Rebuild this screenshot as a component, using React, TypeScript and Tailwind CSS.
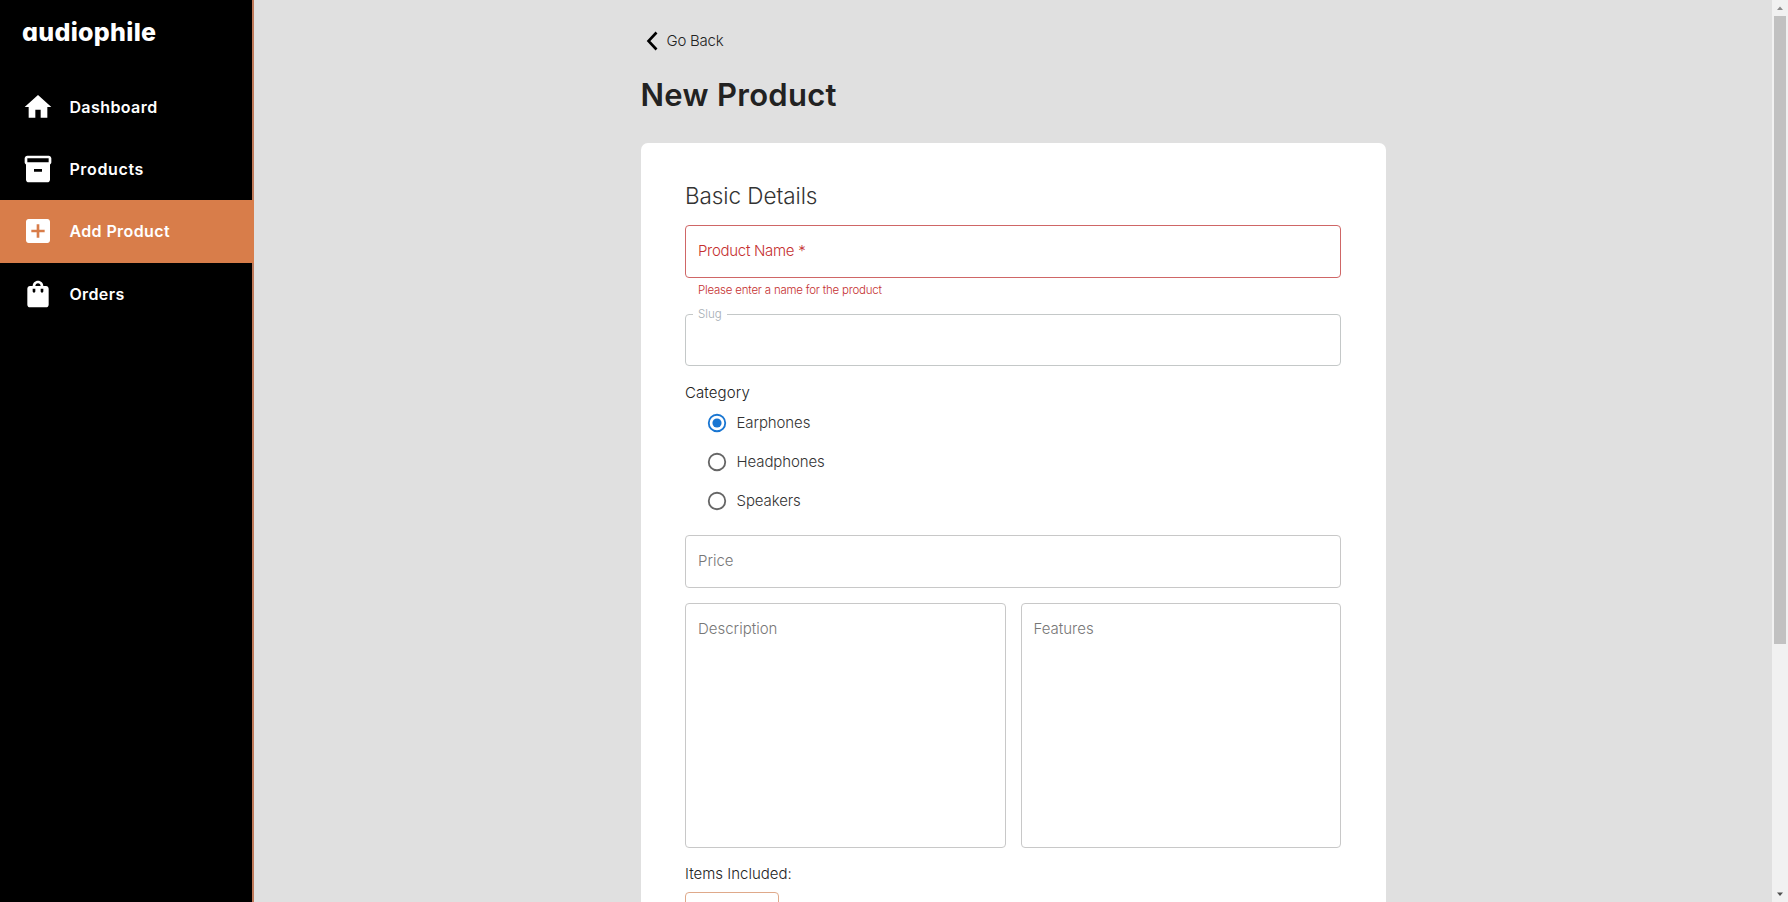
import React from "react";

type IconProps = { d: string; className?: string };

const Icon = ({ d, className }: IconProps) => (
  <svg viewBox="0 0 24 24" fill="currentColor" className={className}>
    <path d={d} />
  </svg>
);

const navItems = [
  { label: "Dashboard", d: "M10 20v-6h4v6h5v-8h3L12 3 2 12h3v8z", spacing: "tracking-[0.42px]" },
  {
    label: "Products",
    d: "M20 2H4c-1 0-2 .9-2 2v3.01c0 .72.43 1.34 1 1.69V20c0 1.1 1.1 2 2 2h14c.9 0 2-.9 2-2V8.7c.57-.35 1-.97 1-1.69V4c0-1.1-1-2-2-2zm-5 12H9v-2h6v2zm5-7H4V4h16v3z",
    spacing: "tracking-[0.65px]",
  },
  {
    label: "Add Product",
    d: "M19 3H5c-1.11 0-2 .9-2 2v14c0 1.1.89 2 2 2h14c1.1 0 2-.9 2-2V5c0-1.1-.9-2-2-2zm-2 10h-4v4h-2v-4H7v-2h4V7h2v4h4v2z",
    spacing: "tracking-[0.4px]",
    active: true,
  },
  {
    label: "Orders",
    d: "M18 6h-2c0-2.21-1.79-4-4-4S8 3.79 8 6H6c-1.1 0-2 .9-2 2v12c0 1.1.9 2 2 2h12c1.1 0 2-.9 2-2V8c0-1.1-.9-2-2-2zm-8 4c0 .55-.45 1-1 1s-1-.45-1-1V8h2v2zm2-6c1.1 0 2 .9 2 2h-4c0-1.1.9-2 2-2zm4 6c0 .55-.45 1-1 1s-1-.45-1-1V8h2v2z",
    spacing: "tracking-[0.4px]",
  },
];

const Sidebar = () => (
  <aside className="flex w-[254px] shrink-0 flex-col border-r-2 border-[#bf7a5a] bg-black text-white">
    <div className="h-[75.4px] pl-[22px] pt-4 text-[25px] font-extrabold leading-[32px] tracking-[0.3px] [font-feature-settings:'cv11']">
      audiophile
    </div>
    <nav className="flex flex-col">
      {navItems.map((item) => (
        <a
          key={item.label}
          className={`-mr-0.5 flex h-[62.4px] items-center gap-[15px] pl-[22.4px] ${item.active ? "bg-[#d87d4a]" : ""}`}
        >
          <Icon d={item.d} className="size-8" />
          <span className={`text-[16px] font-semibold ${item.spacing}`}>{item.label}</span>
        </a>
      ))}
    </nav>
  </aside>
);

const Radio = ({ label, checked }: { label: string; checked?: boolean }) => (
  <label className="flex h-[39.2px] items-center gap-[8.5px] pl-[21px] text-[15px] font-light text-[#333]">
    <svg viewBox="0 0 24 24" className={`size-[22px] ${checked ? "text-[#1976d2]" : "text-[#666]"}`}>
      <circle cx="12" cy="12" r="9" fill="none" stroke="currentColor" strokeWidth="2" />
      {checked && <circle cx="12" cy="12" r="5" fill="currentColor" />}
    </svg>
    <span className="pt-[1.5px] tracking-[-0.1px]">{label}</span>
  </label>
);

const Scrollbar = () => (
  <div className="flex w-4 shrink-0 flex-col items-center bg-[#f1f1f1]">
    <svg viewBox="0 0 16 16" className="size-4 shrink-0 fill-[#8b8b8b]">
      <path d="M5 10h6L8 6.5z" />
    </svg>
    <div className="h-[628px] w-3 bg-[#c1c1c1]" />
    <div className="grow" />
    <svg viewBox="0 0 16 16" className="size-4 shrink-0 fill-[#505050]">
      <path d="M5 6.5h6L8 10z" />
    </svg>
  </div>
);

export default function App() {
  return (
    <div className="flex h-[902px] w-[1788px] overflow-hidden bg-[#e0e0e0] font-['Inter',sans-serif] text-[#222]">
      <Sidebar />
      <main className="flex grow flex-col items-center overflow-hidden">
        <div className="flex w-[745px] shrink-0 flex-col">
          <div className="mt-[29px] flex h-6 items-center pl-[5px]">
            <svg viewBox="0 0 12 20" className="h-5 w-3 fill-none stroke-black stroke-[2.6]">
              <path d="M10.5 1.5 2.5 10l8 8.5" />
            </svg>
            <span className="ml-[9px] pt-px text-[15px] font-[350] tracking-[-0.25px]">Go Back</span>
          </div>
          <h1 className="mt-[21px] h-[42px] text-[31px] font-semibold leading-[42px] tracking-[0.3px]">New Product</h1>
          <section className="mt-[27px] flex h-[900px] flex-col rounded-[7px] bg-white px-[44.5px] pt-[38px]">
            <h2 className="h-[30px] text-[22.5px] font-light leading-[30px] tracking-[-0.07px] text-[#333]">
              Basic Details
            </h2>
            <div className="mt-[14px] flex h-[53px] shrink-0 items-center rounded border border-[#cf6666] px-3 text-[15px] font-light tracking-[-0.3px] text-[#c53030]">
              Product Name *
            </div>
            <p className="mt-1 h-[17px] pl-[13px] text-[11.5px] font-light leading-[17px] tracking-[-0.22px] text-[#c53030]">
              Please enter a name for the product
            </p>
            <fieldset className="mt-[6px] h-[61px] shrink-0 rounded border border-[#c4c8c8] pl-[7px]">
              <legend className="h-[18px] px-[5px] text-[11.5px] font-light leading-[18px] text-[#a5adb3]">Slug</legend>
            </fieldset>
            <h3 className="mt-[17px] h-5 text-[15px] font-[350] leading-5 tracking-[0.1px]">Category</h3>
            <div className="flex flex-col">
              <Radio label="Earphones" checked />
              <Radio label="Headphones" />
              <Radio label="Speakers" />
            </div>
            <div className="mt-[14.5px] flex h-[53px] shrink-0 items-center rounded border border-[#c8c8c8] px-3 text-[15px] font-light text-[#777]">
              Price
            </div>
            <div className="mt-[14.5px] flex h-[245px] shrink-0 gap-[15px] text-[15px] font-light leading-5 text-[#777]">
              <div className="flex-1 rounded border border-[#c8c8c8] px-3 pt-[15px]">Description</div>
              <div className="flex-1 rounded border border-[#c8c8c8] px-3 pt-[15px]">Features</div>
            </div>
            <h3 className="mt-[16.5px] h-5 text-[15px] font-[350] leading-5">Items Included:</h3>
            <button className="mt-2 h-10 w-[94px] shrink-0 rounded border border-[#dfa98a]" />
          </section>
        </div>
      </main>
      <Scrollbar />
    </div>
  );
}
